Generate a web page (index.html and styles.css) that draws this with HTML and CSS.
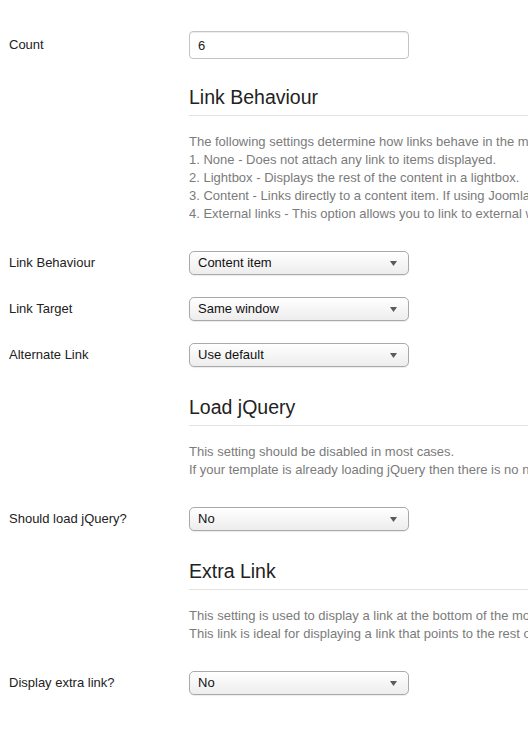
FILE: index.html
```html
<!DOCTYPE html>
<html>
<head>
<meta charset="utf-8">
<title>Module settings</title>
<link rel="stylesheet" href="styles.css">
</head>
<body>
<div class="form">
  <div class="group">
    <div class="label">Count</div>
    <input class="input" type="text" value="6">
  </div>

  <div class="section">
    <div class="section-title">Link Behaviour</div>
    <div class="desc">
      The following settings determine how links behave in the module.<br>
      1. None - Does not attach any link to items displayed.<br>
      2. Lightbox - Displays the rest of the content in a lightbox.<br>
      3. Content - Links directly to a content item. If using Joomla articles, links to the article.<br>
      4. External links - This option allows you to link to external websites.
    </div>
  </div>

  <div class="group">
    <div class="label">Link Behaviour</div>
    <div class="select"><span>Content item</span><svg class="arrow" width="7" height="5" viewBox="0 0 7 5"><path d="M0 0H7L3.5 5Z"/></svg></div>
  </div>
  <div class="group">
    <div class="label">Link Target</div>
    <div class="select"><span>Same window</span><svg class="arrow" width="7" height="5" viewBox="0 0 7 5"><path d="M0 0H7L3.5 5Z"/></svg></div>
  </div>
  <div class="group">
    <div class="label">Alternate Link</div>
    <div class="select"><span>Use default</span><svg class="arrow" width="7" height="5" viewBox="0 0 7 5"><path d="M0 0H7L3.5 5Z"/></svg></div>
  </div>

  <div class="section">
    <div class="section-title">Load jQuery</div>
    <div class="desc">
      This setting should be disabled in most cases.<br>
      If your template is already loading jQuery then there is no need to load it again.
    </div>
  </div>

  <div class="group">
    <div class="label">Should load jQuery?</div>
    <div class="select"><span>No</span><svg class="arrow" width="7" height="5" viewBox="0 0 7 5"><path d="M0 0H7L3.5 5Z"/></svg></div>
  </div>

  <div class="section">
    <div class="section-title">Extra Link</div>
    <div class="desc">
      This setting is used to display a link at the bottom of the module.<br>
      This link is ideal for displaying a link that points to the rest of your content.
    </div>
  </div>

  <div class="group">
    <div class="label">Display extra link?</div>
    <div class="select"><span>No</span><svg class="arrow" width="7" height="5" viewBox="0 0 7 5"><path d="M0 0H7L3.5 5Z"/></svg></div>
  </div>
</div>
</body>
</html>
```

FILE: styles.css
```css
html, body {
  margin: 0;
  padding: 0;
  overflow: hidden;
  background: #fff;
}

body {
  font-family: "Liberation Sans", Arial, Helvetica, sans-serif;
  font-size: 13px;
  line-height: 18px;
  color: #333;
}

.form {
  padding: 31px 0 0 9px;
  width: 900px;
}

.group {
  display: flex;
  align-items: center;
  height: 28px;
}

.group + .group {
  margin-top: 18px;
}

.label {
  width: 180px;
  flex: none;
  color: #222;
}

.input {
  width: 220px;
  height: 28px;
  box-sizing: border-box;
  margin: 0;
  border: 1px solid #c4c4c4;
  border-radius: 4px;
  padding: 0 8px;
  font: inherit;
  color: #222;
  background: #fff;
  box-shadow: inset 0 1px 1px rgba(0, 0, 0, 0.075);
  outline: none;
}

.select {
  width: 220px;
  height: 24px;
  box-sizing: border-box;
  border: 1px solid #a9a9a9;
  border-radius: 5px;
  background: linear-gradient(#ffffff, #ededed);
  box-shadow: 0 1px 1px rgba(0, 0, 0, 0.08);
  display: flex;
  align-items: center;
  justify-content: space-between;
  padding: 0 11px 0 8px;
  color: #111;
}

.arrow {
  fill: #5a5a5a;
}

.section {
  margin: 20px 0 26px 180px;
}

.section-title {
  font-size: 19.5px;
  line-height: 36px;
  color: #222;
  border-bottom: 1px solid #e3e3e3;
}

.desc {
  margin-top: 17px;
  color: #7b7b7b;
  white-space: nowrap;
}
```
